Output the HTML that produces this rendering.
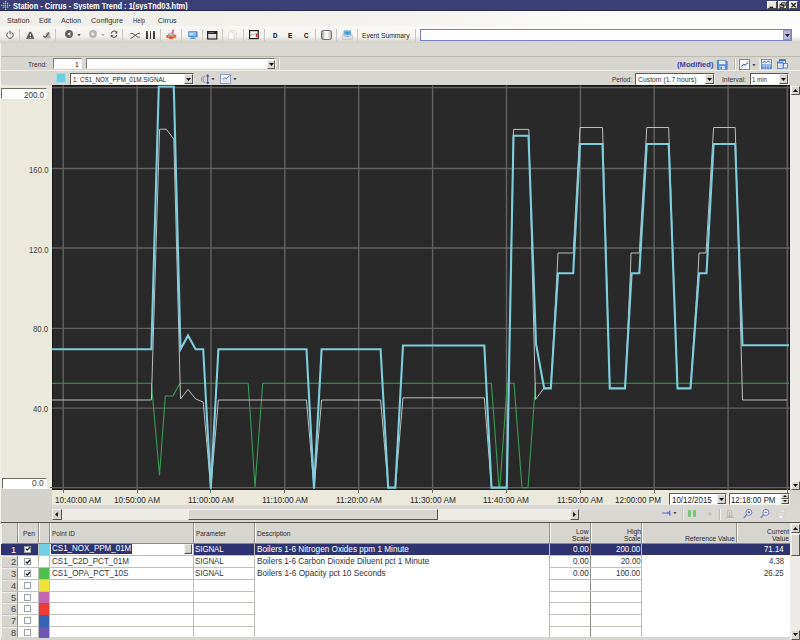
<!DOCTYPE html>
<html lang="en"><head><meta charset="utf-8"><title>Station - Cirrus - System Trend</title>
<style>
html,body{margin:0;padding:0;}
body{width:800px;height:640px;overflow:hidden;position:relative;background:#d6d5d0;font-family:"Liberation Sans", sans-serif;}
.a{position:absolute;}
.t{position:absolute;white-space:pre;transform-origin:0 50%;}
svg{position:absolute;left:0;top:0;overflow:visible;}
</style></head><body>
<div class="a" style="left:0px;top:0px;width:800px;height:10.5px;background:#3c3f76;"></div>
<span class="t" id="t0" style="left:12.8px;top:0.30px;font-size:8.4px;line-height:12.4px;color:#fff;font-weight:bold;transform:scaleX(0.8874);">Station - Cirrus - System Trend : 1(sysTnd03.htm)</span>
<svg width="12" height="11" viewBox="0 0 12 11"><g transform="translate(5.7 5.4) rotate(45)" opacity="0.9"><rect x="-3.38" y="-3.38" width="1.35" height="1.35" fill="#b4e0d6"/><rect x="-3.38" y="-2.03" width="1.35" height="1.35" fill="#2c3a5e"/><rect x="-3.38" y="-0.68" width="1.35" height="1.35" fill="#b4e0d6"/><rect x="-3.38" y="0.68" width="1.35" height="1.35" fill="#2c3a5e"/><rect x="-3.38" y="2.03" width="1.35" height="1.35" fill="#b4e0d6"/><rect x="-2.03" y="-3.38" width="1.35" height="1.35" fill="#2c3a5e"/><rect x="-2.03" y="-2.03" width="1.35" height="1.35" fill="#b4e0d6"/><rect x="-2.03" y="-0.68" width="1.35" height="1.35" fill="#2c3a5e"/><rect x="-2.03" y="0.68" width="1.35" height="1.35" fill="#b4e0d6"/><rect x="-2.03" y="2.03" width="1.35" height="1.35" fill="#2c3a5e"/><rect x="-0.68" y="-3.38" width="1.35" height="1.35" fill="#b4e0d6"/><rect x="-0.68" y="-2.03" width="1.35" height="1.35" fill="#2c3a5e"/><rect x="-0.68" y="-0.68" width="1.35" height="1.35" fill="#d6f2ea"/><rect x="-0.68" y="0.68" width="1.35" height="1.35" fill="#2c3a5e"/><rect x="-0.68" y="2.03" width="1.35" height="1.35" fill="#b4e0d6"/><rect x="0.68" y="-3.38" width="1.35" height="1.35" fill="#2c3a5e"/><rect x="0.68" y="-2.03" width="1.35" height="1.35" fill="#b4e0d6"/><rect x="0.68" y="-0.68" width="1.35" height="1.35" fill="#2c3a5e"/><rect x="0.68" y="0.68" width="1.35" height="1.35" fill="#b4e0d6"/><rect x="0.68" y="2.03" width="1.35" height="1.35" fill="#2c3a5e"/><rect x="2.03" y="-3.38" width="1.35" height="1.35" fill="#b4e0d6"/><rect x="2.03" y="-2.03" width="1.35" height="1.35" fill="#2c3a5e"/><rect x="2.03" y="-0.68" width="1.35" height="1.35" fill="#b4e0d6"/><rect x="2.03" y="0.68" width="1.35" height="1.35" fill="#2c3a5e"/><rect x="2.03" y="2.03" width="1.35" height="1.35" fill="#b4e0d6"/></g></svg>
<div class="a" style="left:0px;top:9.6px;width:800px;height:1px;background:#23265a;"></div>
<div class="a" style="left:767.2px;top:1.2px;width:9.4px;height:8px;background:#e6e4dc;border:1px solid #fbfaf6;box-sizing:border-box;border-right-color:#4a4844;border-bottom-color:#4a4844;"></div>
<svg style="left:767.2px;top:1px" width="10" height="9" viewBox="0 0 10 9"><path d="M2.6 6.3h3.6" stroke="#1a1a1a" stroke-width="1.3"/></svg>
<div class="a" style="left:778px;top:1.2px;width:9px;height:8px;background:#e6e4dc;border:1px solid #fbfaf6;box-sizing:border-box;border-right-color:#4a4844;border-bottom-color:#4a4844;"></div>
<svg style="left:778px;top:1px" width="10" height="9" viewBox="0 0 10 9"><path d="M3.6 1.8h3.6v3h-3.6zM2 3.6h3.6v3h-3.6z" fill="#e6e4dc" stroke="#1a1a1a" stroke-width="0.9"/></svg>
<div class="a" style="left:788.8px;top:1.2px;width:9.2px;height:8px;background:#e6e4dc;border:1px solid #fbfaf6;box-sizing:border-box;border-right-color:#4a4844;border-bottom-color:#4a4844;"></div>
<svg style="left:788.8px;top:1px" width="10" height="9" viewBox="0 0 10 9"><path d="M2.4 2l4.4 4.4M6.8 2l-4.4 4.4" stroke="#1a1a1a" stroke-width="1.2"/></svg>
<div class="a" style="left:0px;top:10.5px;width:800px;height:16px;background:linear-gradient(90deg,#efeee8,#f3f2ee 45%,#fcfcfb 80%);"></div>
<span class="t" id="t1" style="left:6.5px;top:15.20px;font-size:7.6px;line-height:11.6px;color:#333;transform:scaleX(0.9511);">Station</span>
<span class="t" id="t2" style="left:39px;top:15.20px;font-size:7.6px;line-height:11.6px;color:#333;transform:scaleX(0.9165);">Edit</span>
<span class="t" id="t3" style="left:61px;top:15.20px;font-size:7.6px;line-height:11.6px;color:#333;transform:scaleX(0.9474);">Action</span>
<span class="t" id="t4" style="left:91px;top:15.20px;font-size:7.6px;line-height:11.6px;color:#333;transform:scaleX(0.9715);">Configure</span>
<span class="t" id="t5" style="left:132.5px;top:15.20px;font-size:7.6px;line-height:11.6px;color:#333;transform:scaleX(0.7680);">Help</span>
<span class="t" id="t6" style="left:157.5px;top:15.20px;font-size:7.6px;line-height:11.6px;color:#333;transform:scaleX(0.9136);">Cirrus</span>
<div class="a" style="left:0px;top:26px;width:800px;height:17px;background:linear-gradient(90deg,#f3f2ee,#f6f5f2 45%,#fdfdfc 80%);"></div>
<div class="a" style="left:0px;top:26px;width:800px;height:17px;background:linear-gradient(rgba(255,255,255,0.35),rgba(255,255,255,0) 45%,rgba(214,211,202,0) 60%,rgba(205,202,193,0.9));"></div>
<div class="a" style="left:18.7px;top:29px;width:1.1px;height:12px;background:#c9c7c0;"></div>
<div class="a" style="left:55.2px;top:29px;width:1.1px;height:12px;background:#c9c7c0;"></div>
<div class="a" style="left:122.2px;top:29px;width:1.1px;height:12px;background:#c9c7c0;"></div>
<div class="a" style="left:159.7px;top:29px;width:1.1px;height:12px;background:#c9c7c0;"></div>
<div class="a" style="left:180.7px;top:29px;width:1.1px;height:12px;background:#c9c7c0;"></div>
<div class="a" style="left:202.2px;top:29px;width:1.1px;height:12px;background:#c9c7c0;"></div>
<div class="a" style="left:222.2px;top:29px;width:1.1px;height:12px;background:#c9c7c0;"></div>
<div class="a" style="left:242.7px;top:29px;width:1.1px;height:12px;background:#c9c7c0;"></div>
<div class="a" style="left:263.7px;top:29px;width:1.1px;height:12px;background:#c9c7c0;"></div>
<div class="a" style="left:315.2px;top:29px;width:1.1px;height:12px;background:#c9c7c0;"></div>
<div class="a" style="left:335.7px;top:29px;width:1.1px;height:12px;background:#c9c7c0;"></div>
<div class="a" style="left:356.7px;top:29px;width:1.1px;height:12px;background:#c9c7c0;"></div>
<div class="a" style="left:414.7px;top:29px;width:1.1px;height:12px;background:#c9c7c0;"></div>
<span class="t" id="t7" style="left:362.3px;top:30.20px;font-size:7.6px;line-height:11.6px;color:#222;transform:scaleX(0.8828);">Event Summary</span>
<div class="a" style="left:420px;top:28.8px;width:372.3px;height:12px;background:#fff;border:1px solid #7484b8;box-sizing:border-box;"></div>
<div class="a" style="left:783.2px;top:29.8px;width:8.2px;height:10px;background:#b7b8da;border:1px solid #9496c6;box-sizing:border-box;"></div>
<svg style="left:785px;top:33.8px" width="5" height="4"><path d="M0 0h5L2.5 3z" fill="#222"/></svg>
<div class="a" style="left:0px;top:43px;width:800px;height:12.7px;background:#d9d8d3;"></div>
<div class="a" style="left:0px;top:55.7px;width:800px;height:1px;background:#bcb9b0;"></div>
<div class="a" style="left:0px;top:56.7px;width:800px;height:14px;background:#d7d6d1;"></div>
<span class="t" id="t8" style="left:28.2px;top:59.10px;font-size:7.8px;line-height:11.8px;color:#333;transform:scaleX(0.8539);">Trend:</span>
<div class="a" style="left:52.5px;top:58.2px;width:29.8px;height:11.2px;background:#fff;border:1px solid #f4f2ec;box-sizing:border-box;border-top-color:#807e78;border-left-color:#807e78;"></div>
<span class="t" id="t9" style="left:75.3px;top:59.10px;font-size:7.8px;line-height:11.8px;color:#222;transform:scaleX(0.8748);">1</span>
<div class="a" style="left:85.6px;top:58.2px;width:190.6px;height:11.2px;background:#fff;border:1px solid #f4f2ec;box-sizing:border-box;border-top-color:#807e78;border-left-color:#807e78;"></div>
<div class="a" style="left:267px;top:59.5px;width:8px;height:9px;background:#d7d6d1;border:1px solid #f2f0ea;box-sizing:border-box;border-right-color:#66645e;border-bottom-color:#66645e;"></div>
<svg style="left:268.5px;top:62.5px" width="5" height="4"><path d="M0 0h5L2.5 3z" fill="#111"/></svg>
<div class="a" style="left:0px;top:70.4px;width:800px;height:1.1px;background:#efede7;"></div>
<div class="a" style="left:278px;top:58px;width:1px;height:12px;background:#bdbab1;"></div>
<div class="a" style="left:279px;top:58px;width:1px;height:12px;background:#f4f2ec;"></div>
<span class="t" id="t10" style="left:676.5px;top:59.20px;font-size:7.6px;line-height:11.6px;color:#3b40a5;font-weight:bold;transform:scaleX(1.0060);">(Modified)</span>
<div class="a" style="left:0px;top:71.5px;width:800px;height:14.5px;background:#d7d6d1;"></div>
<div class="a" style="left:56px;top:73.4px;width:10.4px;height:9.8px;background:#6fcfe0;border:1px solid #9adfe9;box-sizing:border-box;"></div>
<div class="a" style="left:70px;top:73px;width:124px;height:12px;background:#fff;border:1px solid #f1efe9;box-sizing:border-box;border-top-color:#5e5c57;border-left-color:#5e5c57;"></div>
<span class="t" id="t11" style="left:73px;top:74.10px;font-size:7.8px;line-height:11.8px;color:#222;transform:scaleX(0.7977);">1: CS1_NOX_PPM_01M.SIGNAL</span>
<div class="a" style="left:184px;top:74px;width:9px;height:10px;background:#d7d6d1;border:1px solid #f2f0ea;box-sizing:border-box;border-right-color:#55534e;border-bottom-color:#55534e;"></div>
<svg style="left:186px;top:77.5px" width="5" height="4"><path d="M0 0h5L2.5 3z" fill="#111"/></svg>
<span class="t" id="t12" style="left:612px;top:74.20px;font-size:7.6px;line-height:11.6px;color:#333;transform:scaleX(0.8312);">Period:</span>
<div class="a" style="left:635px;top:73px;width:80px;height:12px;background:#fff;border:1px solid #f1efe9;box-sizing:border-box;border-top-color:#5e5c57;border-left-color:#5e5c57;"></div>
<span class="t" id="t13" style="left:638px;top:74.20px;font-size:7.6px;line-height:11.6px;color:#333;transform:scaleX(0.9000);">Custom (1.7 hours)</span>
<div class="a" style="left:704.5px;top:74px;width:9.5px;height:10px;background:#d7d6d1;border:1px solid #f2f0ea;box-sizing:border-box;border-right-color:#55534e;border-bottom-color:#55534e;"></div>
<svg style="left:707px;top:77.5px" width="5" height="4"><path d="M0 0h5L2.5 3z" fill="#111"/></svg>
<span class="t" id="t14" style="left:722px;top:74.20px;font-size:7.6px;line-height:11.6px;color:#333;transform:scaleX(0.8884);">Interval:</span>
<div class="a" style="left:749.5px;top:73px;width:39px;height:12px;background:#fff;border:1px solid #f1efe9;box-sizing:border-box;border-top-color:#5e5c57;border-left-color:#5e5c57;"></div>
<span class="t" id="t15" style="left:751.5px;top:74.20px;font-size:7.6px;line-height:11.6px;color:#333;transform:scaleX(0.8074);">1 min</span>
<div class="a" style="left:779px;top:74px;width:9px;height:10px;background:#d7d6d1;border:1px solid #f2f0ea;box-sizing:border-box;border-right-color:#55534e;border-bottom-color:#55534e;"></div>
<svg style="left:781px;top:77.5px" width="5" height="4"><path d="M0 0h5L2.5 3z" fill="#111"/></svg>
<div class="a" style="left:0px;top:84.8px;width:52.3px;height:404px;background:#ebe9dc;"></div>
<div class="a" style="left:1.2px;top:88.4px;width:45.5px;height:10.6px;background:#fff;border:1px solid #fff;box-sizing:border-box;border-top-color:#6e6c66;border-left-color:#6e6c66;"></div>
<span class="t" id="t16" style="left:23.7px;top:89.90px;font-size:8.2px;line-height:12.2px;color:#333;transform:scaleX(0.9805);">200.0</span>
<span class="t" id="t17" style="left:28.9px;top:164.90px;font-size:8.2px;line-height:12.2px;color:#444;transform:scaleX(0.9512);">160.0</span>
<span class="t" id="t18" style="left:28.9px;top:244.90px;font-size:8.2px;line-height:12.2px;color:#444;transform:scaleX(0.9512);">120.0</span>
<span class="t" id="t19" style="left:33.2px;top:323.90px;font-size:8.2px;line-height:12.2px;color:#444;transform:scaleX(0.9537);">80.0</span>
<span class="t" id="t20" style="left:33.2px;top:403.90px;font-size:8.2px;line-height:12.2px;color:#444;transform:scaleX(0.9537);">40.0</span>
<div class="a" style="left:1.5px;top:477.7px;width:45px;height:11px;background:#fff;border:1px solid #fff;box-sizing:border-box;border-top-color:#6e6c66;border-left-color:#6e6c66;"></div>
<span class="t" id="t21" style="left:32.2px;top:477.90px;font-size:8.2px;line-height:12.2px;color:#444;transform:scaleX(1.0272);">0.0</span>
<div class="a" style="left:52.1px;top:85.4px;width:737.6999999999999px;height:404.70000000000005px;background:#292929;border:1.5px solid #161616;box-sizing:border-box;"></div>
<svg width="800" height="640" viewBox="0 0 800 640"><defs><clipPath id="cc"><rect x="52.1" y="85.4" width="737.6999999999999" height="404.70000000000005"/></clipPath></defs><g stroke="#626262" stroke-width="1.4" fill="none"><path d="M63.2 85.4V490.1"/><path d="M137.1 85.4V490.1"/><path d="M211.0 85.4V490.1"/><path d="M284.8 85.4V490.1"/><path d="M358.7 85.4V490.1"/><path d="M432.6 85.4V490.1"/><path d="M506.5 85.4V490.1"/><path d="M580.4 85.4V490.1"/><path d="M654.2 85.4V490.1"/><path d="M728.1 85.4V490.1"/><path d="M52.1 87.6H789.8"/><path d="M52.1 168.5H789.8"/><path d="M52.1 248H789.8"/><path d="M52.1 328.4H789.8"/><path d="M52.1 408.1H789.8"/><path d="M52.1 487.6H789.8"/><path d="M787.3 85.4V490.1"/></g><g clip-path="url(#cc)" fill="none" stroke-linejoin="miter"><polyline points="52,383.2 151.4,383.2 159.5,475.4 165.3,396 172.9,396 180,383.2 248.2,383.2 255,487 262.7,383.2 491.4,383.2 499,487.6 499.8,487.6 507.3,383.2 514,383.2 522,487.6 528,487.6 535.5,383.2 789,383.2" stroke="#3d9a55" stroke-width="1.1"/><polyline points="52,400 151.4,400 159.6,129.2 166.3,129.2 173.8,139 180.5,399 188,389.4 195.6,399 203.2,402 210.8,488.5 218.4,400 306.5,400 314,488.5 321.6,400 380.6,400 388.2,487.6 395.3,487.6 403,397.8 484.3,397.8 491.5,487.6 506.8,487.6 513.5,129.4 528.8,129.4 535.5,399.5 544.2,387.8 550.8,388.4 557,273.3 558,253 573.2,253 580,127.5 602.5,127.5 603,144 609.8,388.4 625,388.4 630.4,273.3 631,253 639.3,253 646.8,127.5 668.7,127.5 669.2,144 677.5,388.4 690.5,388.4 698,273.3 699,253 706,253 713.6,127.5 735.2,127.5 735.7,144 742.5,400 787,400" stroke="#cfcfcf" stroke-width="0.9"/><polyline points="52,349.3 151.4,349.3 158.8,86.4 173.8,86.4 180.5,349.3 188,335.5 195.6,349.3 203.2,349.3 210.8,488.5 218.4,349.3 306.5,349.3 314,488.5 321.6,349.3 380.6,349.3 388.2,487.6 395.3,487.6 403,345.5 484.3,345.5 491.5,487.6 506.8,487.6 513.5,135.8 528.5,135.8 536,344 544.2,388.4 550.8,388.4 558,273.3 573.2,273.3 580,144 602.5,144 609.8,388.4 625,388.4 631.6,273.3 639.3,273.3 646.8,144 668.7,144 677.5,388.4 690.5,388.4 699,273.3 706.5,273.3 713.6,144 735.2,144 742.5,345.3 789,345.3" stroke="#80cddc" stroke-width="2.1"/></g></svg>
<div class="a" style="left:790px;top:86px;width:10px;height:404px;background:#ecebe7;"></div>
<div class="a" style="left:790.5px;top:86px;width:9.5px;height:9px;background:#d7d6d1;border:1px solid #f2f0ea;box-sizing:border-box;border-right-color:#55534e;border-bottom-color:#55534e;"></div>
<svg style="left:793px;top:89px" width="5" height="4"><path d="M0 3h5L2.5 0z" fill="#111"/></svg>
<div class="a" style="left:790.5px;top:481px;width:9.5px;height:9px;background:#d7d6d1;border:1px solid #f2f0ea;box-sizing:border-box;border-right-color:#55534e;border-bottom-color:#55534e;"></div>
<svg style="left:793px;top:484px" width="5" height="4"><path d="M0 0h5L2.5 3z" fill="#111"/></svg>
<div class="a" style="left:0px;top:488.8px;width:52px;height:33px;background:#d3d2cd;"></div>
<div class="a" style="left:52px;top:490.1px;width:738px;height:14.9px;background:#ebe9dc;"></div>
<div class="a" style="left:790px;top:490.1px;width:10px;height:14.9px;background:#d7d6d1;"></div>
<div class="a" style="left:50px;top:487.1px;width:2.2px;height:1px;background:#555;"></div>
<div class="a" style="left:62.7px;top:490px;width:1px;height:3.3px;background:#6a6a68;"></div>
<span class="t" id="t22" style="left:55.2px;top:494.30px;font-size:8.4px;line-height:12.4px;color:#262626;transform:scaleX(0.9781);">10:40:00 AM</span>
<div class="a" style="left:136.57999999999998px;top:490px;width:1px;height:3.3px;background:#6a6a68;"></div>
<span class="t" id="t23" style="left:114.07999999999998px;top:494.30px;font-size:8.4px;line-height:12.4px;color:#262626;transform:scaleX(0.9781);">10:50:00 AM</span>
<div class="a" style="left:210.45999999999998px;top:490px;width:1px;height:3.3px;background:#6a6a68;"></div>
<span class="t" id="t24" style="left:187.95999999999998px;top:494.30px;font-size:8.4px;line-height:12.4px;color:#262626;transform:scaleX(0.9912);">11:00:00 AM</span>
<div class="a" style="left:284.34px;top:490px;width:1px;height:3.3px;background:#6a6a68;"></div>
<span class="t" id="t25" style="left:261.84px;top:494.30px;font-size:8.4px;line-height:12.4px;color:#262626;transform:scaleX(0.9912);">11:10:00 AM</span>
<div class="a" style="left:358.21999999999997px;top:490px;width:1px;height:3.3px;background:#6a6a68;"></div>
<span class="t" id="t26" style="left:335.71999999999997px;top:494.30px;font-size:8.4px;line-height:12.4px;color:#262626;transform:scaleX(0.9912);">11:20:00 AM</span>
<div class="a" style="left:432.09999999999997px;top:490px;width:1px;height:3.3px;background:#6a6a68;"></div>
<span class="t" id="t27" style="left:409.59999999999997px;top:494.30px;font-size:8.4px;line-height:12.4px;color:#262626;transform:scaleX(0.9912);">11:30:00 AM</span>
<div class="a" style="left:505.97999999999996px;top:490px;width:1px;height:3.3px;background:#6a6a68;"></div>
<span class="t" id="t28" style="left:483.47999999999996px;top:494.30px;font-size:8.4px;line-height:12.4px;color:#262626;transform:scaleX(0.9912);">11:40:00 AM</span>
<div class="a" style="left:579.86px;top:490px;width:1px;height:3.3px;background:#6a6a68;"></div>
<span class="t" id="t29" style="left:557.36px;top:494.30px;font-size:8.4px;line-height:12.4px;color:#262626;transform:scaleX(0.9912);">11:50:00 AM</span>
<div class="a" style="left:653.74px;top:490px;width:1px;height:3.3px;background:#6a6a68;"></div>
<span class="t" id="t30" style="left:614.5px;top:494.30px;font-size:8.4px;line-height:12.4px;color:#262626;transform:scaleX(0.9684);">12:00:00 PM</span>
<div class="a" style="left:786.8px;top:490px;width:1px;height:3px;background:#6a6a68;"></div>
<div class="a" style="left:669.3px;top:492.8px;width:57.6px;height:12px;background:#fff;border:1px solid #f1efe9;box-sizing:border-box;border-top-color:#5e5c57;border-left-color:#5e5c57;"></div>
<span class="t" id="t31" style="left:671.8px;top:494.00px;font-size:9px;line-height:13px;color:#222;transform:scaleX(0.8835);">10/12/2015</span>
<div class="a" style="left:717px;top:493.8px;width:9px;height:10px;background:#d7d6d1;border:1px solid #f2f0ea;box-sizing:border-box;border-right-color:#55534e;border-bottom-color:#55534e;"></div>
<svg style="left:719px;top:497.5px" width="5" height="4"><path d="M0 0h5L2.5 3z" fill="#111"/></svg>
<div class="a" style="left:729px;top:492.8px;width:61px;height:12px;background:#fff;border:1px solid #f1efe9;box-sizing:border-box;border-top-color:#5e5c57;border-left-color:#5e5c57;"></div>
<span class="t" id="t32" style="left:731.2px;top:494.00px;font-size:9px;line-height:13px;color:#222;transform:scaleX(0.8698);">12:18:00 PM</span>
<div class="a" style="left:780.5px;top:493.8px;width:8.5px;height:5px;background:#d7d6d1;border:1px solid #f2f0ea;box-sizing:border-box;border-right-color:#55534e;border-bottom-color:#55534e;"></div>
<div class="a" style="left:780.5px;top:498.8px;width:8.5px;height:5px;background:#d7d6d1;border:1px solid #f2f0ea;box-sizing:border-box;border-right-color:#55534e;border-bottom-color:#55534e;"></div>
<svg style="left:782.8px;top:495.3px" width="4" height="7"><path d="M0 2h4L2 0zM0 5h4L2 7z" fill="#111"/></svg>
<div class="a" style="left:52px;top:505px;width:748px;height:17px;background:#d9d8d4;"></div>
<div class="a" style="left:52px;top:509px;width:527px;height:10.5px;background:#ecebe7;"></div>
<div class="a" style="left:52px;top:509px;width:9.5px;height:10.5px;background:#d7d6d1;border:1px solid #f2f0ea;box-sizing:border-box;border-right-color:#55534e;border-bottom-color:#55534e;"></div>
<svg style="left:55px;top:511.5px" width="4" height="5"><path d="M3 0v5L0 2.5z" fill="#111"/></svg>
<div class="a" style="left:569.5px;top:509px;width:9.5px;height:10.5px;background:#d7d6d1;border:1px solid #f2f0ea;box-sizing:border-box;border-right-color:#55534e;border-bottom-color:#55534e;"></div>
<svg style="left:573px;top:511.5px" width="4" height="5"><path d="M0 0v5L3 2.5z" fill="#111"/></svg>
<div class="a" style="left:187.5px;top:509px;width:250.5px;height:10.5px;background:#d7d6d1;border:1px solid #f2f0ea;box-sizing:border-box;border-right-color:#55534e;border-bottom-color:#55534e;"></div>
<div class="a" style="left:0px;top:521.5px;width:800px;height:1.5px;background:#55534e;"></div>
<div class="a" style="left:0px;top:523px;width:790px;height:21px;background:#d6d5d0;"></div>
<div class="a" style="left:0px;top:544px;width:790px;height:96px;background:#fff;"></div>
<div class="a" style="left:0px;top:544.2px;width:790px;height:10.6px;background:#2f3470;"></div>
<div class="a" style="left:0px;top:544px;width:17.5px;height:96px;background:#d6d5d0;"></div>
<div class="a" style="left:17.0px;top:523px;width:1px;height:21px;background:#96948c;"></div>
<div class="a" style="left:18.0px;top:523px;width:1px;height:21px;background:#f6f5f1;"></div>
<div class="a" style="left:17.0px;top:544px;width:1px;height:93px;background:#8f8e89;"></div>
<div class="a" style="left:37.7px;top:523px;width:1px;height:21px;background:#96948c;"></div>
<div class="a" style="left:38.7px;top:523px;width:1px;height:21px;background:#f6f5f1;"></div>
<div class="a" style="left:37.7px;top:544px;width:1px;height:93px;background:#bdbcb7;"></div>
<div class="a" style="left:49.3px;top:523px;width:1px;height:21px;background:#96948c;"></div>
<div class="a" style="left:50.3px;top:523px;width:1px;height:21px;background:#f6f5f1;"></div>
<div class="a" style="left:49.3px;top:544px;width:1px;height:93px;background:#bdbcb7;"></div>
<div class="a" style="left:192.5px;top:523px;width:1px;height:21px;background:#96948c;"></div>
<div class="a" style="left:193.5px;top:523px;width:1px;height:21px;background:#f6f5f1;"></div>
<div class="a" style="left:192.5px;top:544px;width:1px;height:93px;background:#bdbcb7;"></div>
<div class="a" style="left:254.0px;top:523px;width:1px;height:21px;background:#96948c;"></div>
<div class="a" style="left:255.0px;top:523px;width:1px;height:21px;background:#f6f5f1;"></div>
<div class="a" style="left:254.0px;top:544px;width:1px;height:93px;background:#bdbcb7;"></div>
<div class="a" style="left:549.3px;top:523px;width:1px;height:21px;background:#96948c;"></div>
<div class="a" style="left:550.3px;top:523px;width:1px;height:21px;background:#f6f5f1;"></div>
<div class="a" style="left:549.3px;top:544px;width:1px;height:93px;background:#bdbcb7;"></div>
<div class="a" style="left:590.0px;top:523px;width:1px;height:21px;background:#96948c;"></div>
<div class="a" style="left:591.0px;top:523px;width:1px;height:21px;background:#f6f5f1;"></div>
<div class="a" style="left:590.0px;top:544px;width:1px;height:93px;background:#8f8e89;"></div>
<div class="a" style="left:641.2px;top:523px;width:1px;height:21px;background:#96948c;"></div>
<div class="a" style="left:642.2px;top:523px;width:1px;height:21px;background:#f6f5f1;"></div>
<div class="a" style="left:641.2px;top:544px;width:1px;height:93px;background:#bdbcb7;"></div>
<div class="a" style="left:736.1px;top:523px;width:1px;height:21px;background:#96948c;"></div>
<div class="a" style="left:737.1px;top:523px;width:1px;height:21px;background:#f6f5f1;"></div>
<div class="a" style="left:0px;top:555.0500000000001px;width:254.5px;height:1px;background:#c2c1bc;"></div>
<div class="a" style="left:549.5px;top:555.0500000000001px;width:92px;height:1px;background:#c2c1bc;"></div>
<div class="a" style="left:0px;top:566.9000000000001px;width:254.5px;height:1px;background:#c2c1bc;"></div>
<div class="a" style="left:549.5px;top:566.9000000000001px;width:92px;height:1px;background:#c2c1bc;"></div>
<div class="a" style="left:0px;top:578.75px;width:254.5px;height:1px;background:#c2c1bc;"></div>
<div class="a" style="left:549.5px;top:578.75px;width:92px;height:1px;background:#c2c1bc;"></div>
<div class="a" style="left:0px;top:590.6px;width:254.5px;height:1px;background:#c2c1bc;"></div>
<div class="a" style="left:549.5px;top:590.6px;width:92px;height:1px;background:#c2c1bc;"></div>
<div class="a" style="left:0px;top:602.45px;width:254.5px;height:1px;background:#c2c1bc;"></div>
<div class="a" style="left:549.5px;top:602.45px;width:92px;height:1px;background:#c2c1bc;"></div>
<div class="a" style="left:0px;top:614.3000000000001px;width:254.5px;height:1px;background:#c2c1bc;"></div>
<div class="a" style="left:549.5px;top:614.3000000000001px;width:92px;height:1px;background:#c2c1bc;"></div>
<div class="a" style="left:0px;top:626.1500000000001px;width:254.5px;height:1px;background:#c2c1bc;"></div>
<div class="a" style="left:549.5px;top:626.1500000000001px;width:92px;height:1px;background:#c2c1bc;"></div>
<div class="a" style="left:0px;top:543.3px;width:790px;height:1px;background:#8a8880;"></div>
<div class="a" style="left:0px;top:544.2px;width:17px;height:1px;background:#efede8;"></div>
<div class="a" style="left:0px;top:556.0500000000001px;width:17px;height:1px;background:#efede8;"></div>
<div class="a" style="left:0px;top:567.9000000000001px;width:17px;height:1px;background:#efede8;"></div>
<div class="a" style="left:0px;top:579.75px;width:17px;height:1px;background:#efede8;"></div>
<div class="a" style="left:0px;top:591.6px;width:17px;height:1px;background:#efede8;"></div>
<div class="a" style="left:0px;top:603.45px;width:17px;height:1px;background:#efede8;"></div>
<div class="a" style="left:0px;top:615.3000000000001px;width:17px;height:1px;background:#efede8;"></div>
<div class="a" style="left:0px;top:627.1500000000001px;width:17px;height:1px;background:#efede8;"></div>
<div class="a" style="left:0px;top:523px;width:1.5px;height:114px;background:#f2f1ec;"></div>
<div class="a" style="left:0px;top:637px;width:790px;height:3px;background:#d6d5d0;"></div>
<span class="t" id="t33" style="left:23px;top:528.20px;font-size:7.6px;line-height:11.6px;color:#2a2a2a;transform:scaleX(0.8879);">Pen</span>
<span class="t" id="t34" style="left:52px;top:528.20px;font-size:7.6px;line-height:11.6px;color:#2a2a2a;transform:scaleX(0.8514);">Point ID</span>
<span class="t" id="t35" style="left:195.5px;top:528.20px;font-size:7.6px;line-height:11.6px;color:#2a2a2a;transform:scaleX(0.8462);">Parameter</span>
<span class="t" id="t36" style="left:257px;top:528.20px;font-size:7.6px;line-height:11.6px;color:#2a2a2a;transform:scaleX(0.8819);">Description</span>
<span class="t" id="t37" style="left:576px;top:526.20px;font-size:7.6px;line-height:11.6px;color:#2a2a2a;transform:scaleX(0.9112);">Low</span>
<span class="t" id="t38" style="left:571.8px;top:533.20px;font-size:7.6px;line-height:11.6px;color:#2a2a2a;transform:scaleX(0.8895);">Scale</span>
<span class="t" id="t39" style="left:626.5px;top:526.20px;font-size:7.6px;line-height:11.6px;color:#2a2a2a;transform:scaleX(0.8960);">High</span>
<span class="t" id="t40" style="left:623.8px;top:533.20px;font-size:7.6px;line-height:11.6px;color:#2a2a2a;transform:scaleX(0.8789);">Scale</span>
<span class="t" id="t41" style="left:685.3px;top:533.20px;font-size:7.6px;line-height:11.6px;color:#2a2a2a;transform:scaleX(0.8873);">Reference Value</span>
<span class="t" id="t42" style="left:766.5px;top:526.20px;font-size:7.6px;line-height:11.6px;color:#2a2a2a;transform:scaleX(0.8725);">Current</span>
<span class="t" id="t43" style="left:771.5px;top:533.20px;font-size:7.6px;line-height:11.6px;color:#2a2a2a;transform:scaleX(0.9067);">Value</span>
<div class="a" style="left:0px;top:544.2px;width:17.5px;height:10.6px;background:#2f3470;"></div>
<span class="t" id="t44" style="left:11px;top:543.10px;font-size:9.8px;line-height:13.8px;color:#fff;transform:scaleX(0.9536);">1</span>
<div class="a" style="left:24.4px;top:545.7px;width:7px;height:7px;background:#fff;border:1px solid #9ca1aa;box-sizing:border-box;"></div>
<svg style="left:25.4px;top:546.4px" width="6" height="6"><path d="M0.8 2.6L2.3 4.2L5 1" fill="none" stroke="#111" stroke-width="1.2"/></svg>
<div class="a" style="left:38.7px;top:544.2px;width:10.6px;height:11.3px;background:#70cfe0;"></div>
<div class="a" style="left:50px;top:543.5px;width:142.5px;height:11.3px;background:#fff;"></div>
<div class="a" style="left:51px;top:543.6px;width:80.8px;height:10px;background:#2f3470;"></div>
<div class="a" style="left:183.5px;top:544.0px;width:8.5px;height:10.4px;background:#d7d6d1;border:1px solid #f2f0ea;box-sizing:border-box;border-right-color:#55534e;border-bottom-color:#55534e;"></div>
<span class="t" id="t45" style="left:185.5px;top:545.50px;font-size:6px;line-height:10px;color:#333;transform:scaleX(0.8972);">...</span>
<span class="t" id="t46" style="left:52px;top:542.25px;font-size:8.5px;line-height:12.5px;color:#fff;transform:scaleX(0.9430);">CS1_NOX_PPM_01M</span>
<span class="t" id="t47" style="left:195.3px;top:543.25px;font-size:8.5px;line-height:12.5px;color:#fff;transform:scaleX(0.9202);">SIGNAL</span>
<span class="t" id="t48" style="left:257.3px;top:543.25px;font-size:8.5px;line-height:12.5px;color:#fff;transform:scaleX(0.9620);">Boilers 1-6 Nitrogen Oxides ppm 1 Minute</span>
<span class="t" id="t49" style="left:572.8px;top:543.25px;font-size:8.5px;line-height:12.5px;color:#fff;transform:scaleX(0.9609);">0.00</span>
<span class="t" id="t50" style="left:616.4px;top:543.25px;font-size:8.5px;line-height:12.5px;color:#fff;transform:scaleX(0.9308);">200.00</span>
<span class="t" id="t51" style="left:764.1999999999999px;top:543.25px;font-size:8.5px;line-height:12.5px;color:#fff;transform:scaleX(0.9210);">71.14</span>
<span class="t" id="t52" style="left:11px;top:555.10px;font-size:9.8px;line-height:13.8px;color:#444;transform:scaleX(0.9536);">2</span>
<div class="a" style="left:24.4px;top:557.95px;width:7px;height:7px;background:#fff;border:1px solid #9ca1aa;box-sizing:border-box;"></div>
<svg style="left:25.4px;top:558.7px" width="6" height="6"><path d="M0.8 2.6L2.3 4.2L5 1" fill="none" stroke="#111" stroke-width="1.2"/></svg>
<div class="a" style="left:38.7px;top:556.0500000000001px;width:10.6px;height:11.3px;background:#ffffff;"></div>
<span class="t" id="t53" style="left:52px;top:555.25px;font-size:8.5px;line-height:12.5px;color:#333;transform:scaleX(0.9475);">CS1_C2D_PCT_01M</span>
<span class="t" id="t54" style="left:195.3px;top:555.25px;font-size:8.5px;line-height:12.5px;color:#333;transform:scaleX(0.9202);">SIGNAL</span>
<span class="t" id="t55" style="left:257.3px;top:555.25px;font-size:8.5px;line-height:12.5px;color:#333;transform:scaleX(0.9617);">Boilers 1-6 Carbon Dioxide Diluent pct 1 Minute</span>
<span class="t" id="t56" style="left:572.8px;top:555.25px;font-size:8.5px;line-height:12.5px;color:#333;transform:scaleX(0.9609);">0.00</span>
<span class="t" id="t57" style="left:621.0px;top:555.25px;font-size:8.5px;line-height:12.5px;color:#333;transform:scaleX(0.9210);">20.00</span>
<span class="t" id="t58" style="left:768.8px;top:555.25px;font-size:8.5px;line-height:12.5px;color:#333;transform:scaleX(0.9065);">4.38</span>
<span class="t" id="t59" style="left:11px;top:567.10px;font-size:9.8px;line-height:13.8px;color:#444;transform:scaleX(0.9536);">3</span>
<div class="a" style="left:24.4px;top:569.8000000000001px;width:7px;height:7px;background:#fff;border:1px solid #9ca1aa;box-sizing:border-box;"></div>
<svg style="left:25.4px;top:570.5px" width="6" height="6"><path d="M0.8 2.6L2.3 4.2L5 1" fill="none" stroke="#111" stroke-width="1.2"/></svg>
<div class="a" style="left:38.7px;top:567.9000000000001px;width:10.6px;height:11.3px;background:#4fbf52;"></div>
<span class="t" id="t60" style="left:52px;top:567.25px;font-size:8.5px;line-height:12.5px;color:#333;transform:scaleX(0.9542);">CS1_OPA_PCT_10S</span>
<span class="t" id="t61" style="left:195.3px;top:567.25px;font-size:8.5px;line-height:12.5px;color:#333;transform:scaleX(0.9202);">SIGNAL</span>
<span class="t" id="t62" style="left:257.3px;top:567.25px;font-size:8.5px;line-height:12.5px;color:#333;transform:scaleX(0.9694);">Boilers 1-6 Opacity pct 10 Seconds</span>
<span class="t" id="t63" style="left:572.8px;top:567.25px;font-size:8.5px;line-height:12.5px;color:#333;transform:scaleX(0.9609);">0.00</span>
<span class="t" id="t64" style="left:616.4px;top:567.25px;font-size:8.5px;line-height:12.5px;color:#333;transform:scaleX(0.9308);">100.00</span>
<span class="t" id="t65" style="left:764.1999999999999px;top:567.25px;font-size:8.5px;line-height:12.5px;color:#333;transform:scaleX(0.9210);">26.25</span>
<span class="t" id="t66" style="left:11px;top:579.10px;font-size:9.8px;line-height:13.8px;color:#444;transform:scaleX(0.9536);">4</span>
<div class="a" style="left:24.4px;top:581.65px;width:7px;height:7px;background:#fff;border:1px solid #9ca1aa;box-sizing:border-box;"></div>
<div class="a" style="left:38.7px;top:579.75px;width:10.6px;height:11.3px;background:#f2e33a;"></div>
<span class="t" id="t67" style="left:11px;top:591.10px;font-size:9.8px;line-height:13.8px;color:#444;transform:scaleX(0.9536);">5</span>
<div class="a" style="left:24.4px;top:593.5px;width:7px;height:7px;background:#fff;border:1px solid #9ca1aa;box-sizing:border-box;"></div>
<div class="a" style="left:38.7px;top:591.6px;width:10.6px;height:11.3px;background:#c565b3;"></div>
<span class="t" id="t68" style="left:11px;top:602.10px;font-size:9.8px;line-height:13.8px;color:#444;transform:scaleX(0.9536);">6</span>
<div class="a" style="left:24.4px;top:605.35px;width:7px;height:7px;background:#fff;border:1px solid #9ca1aa;box-sizing:border-box;"></div>
<div class="a" style="left:38.7px;top:603.45px;width:10.6px;height:11.3px;background:#ef3b35;"></div>
<span class="t" id="t69" style="left:11px;top:614.10px;font-size:9.8px;line-height:13.8px;color:#444;transform:scaleX(0.9536);">7</span>
<div class="a" style="left:24.4px;top:617.2px;width:7px;height:7px;background:#fff;border:1px solid #9ca1aa;box-sizing:border-box;"></div>
<div class="a" style="left:38.7px;top:615.3000000000001px;width:10.6px;height:11.3px;background:#3563b4;"></div>
<span class="t" id="t70" style="left:11px;top:626.10px;font-size:9.8px;line-height:13.8px;color:#444;transform:scaleX(0.9536);">8</span>
<div class="a" style="left:24.4px;top:629.0500000000001px;width:7px;height:7px;background:#fff;border:1px solid #9ca1aa;box-sizing:border-box;"></div>
<div class="a" style="left:38.7px;top:627.1500000000001px;width:10.6px;height:11.3px;background:#6d55b2;"></div>
<div class="a" style="left:790px;top:523px;width:10px;height:117px;background:#ecebe7;"></div>
<div class="a" style="left:790.5px;top:523.5px;width:9.5px;height:9.5px;background:#d7d6d1;border:1px solid #f2f0ea;box-sizing:border-box;border-right-color:#55534e;border-bottom-color:#55534e;"></div>
<svg style="left:793px;top:526.5px" width="5" height="4"><path d="M0 3h5L2.5 0z" fill="#111"/></svg>
<div class="a" style="left:790.5px;top:630px;width:9.5px;height:9.5px;background:#d7d6d1;border:1px solid #f2f0ea;box-sizing:border-box;border-right-color:#55534e;border-bottom-color:#55534e;"></div>
<svg style="left:793px;top:633px" width="5" height="4"><path d="M0 0h5L2.5 3z" fill="#111"/></svg>
<div class="a" style="left:790.5px;top:533.5px;width:9.5px;height:22px;background:#d7d6d1;border:1px solid #f2f0ea;box-sizing:border-box;border-right-color:#55534e;border-bottom-color:#55534e;"></div>
<div class="a" style="left:0px;top:43px;width:1.1px;height:597px;background:#f1f0eb;"></div>
<svg style="left:5.6px;top:30.4px" width="8" height="8.6" viewBox="0 0 8 8.6"><path d="M2.4 2.3A3.2 3.2 0 1 0 5.6 2.3" fill="none" stroke="#4e4e4e" stroke-width="1"/><path d="M4 0.7V4.1" stroke="#4e4e4e" stroke-width="1"/></svg>
<svg style="left:25.8px;top:30.6px" width="8.6" height="9.4" viewBox="0 0 8.6 9.4"><ellipse cx="4.3" cy="8.3" rx="4" ry="0.9" fill="#dcdad4"/><path d="M4.3 0.9C5 0.9 5.3 1.6 5.6 2.2L8.1 7.6H0.5L3 2.2C3.3 1.6 3.6 0.9 4.3 0.9z" fill="#4a4a4a" stroke="#4a4a4a" stroke-width="0.5" stroke-linejoin="round"/><path d="M4.3 2.8V5.2" stroke="#fff" stroke-width="1.1"/><circle cx="4.3" cy="6.4" r="0.55" fill="#fff"/><path d="M1.2 6.6H3M5.6 6.6H7.4" stroke="#8a8a8a" stroke-width="0.6"/></svg>
<svg style="left:41.5px;top:30.8px" width="10" height="9" viewBox="0 0 10 9"><ellipse cx="5.2" cy="8" rx="4.2" ry="0.9" fill="#dedcd6"/><path d="M3.4 2.2L6 0.8L9 6.4L7.4 7.4H4.6z" fill="#b9b7b1"/><path d="M1.3 5L3.2 6.5L7.3 1.3" fill="none" stroke="#565656" stroke-width="1.2"/><path d="M4.4 7.2L8.2 3.6" stroke="#9c9a94" stroke-width="0.9"/></svg>
<svg style="left:65px;top:30.4px" width="8" height="8" viewBox="0 0 8 8"><circle cx="4" cy="4" r="3.9" fill="#585858"/><circle cx="4" cy="4" r="3.4" fill="none" stroke="#7a7a7a" stroke-width="0.5"/><path d="M5.4 2V6L2.2 4z" fill="#f2f2f2"/></svg>
<svg style="left:77.2px;top:33.8px" width="4" height="3" viewBox="0 0 4 3"><path d="M0.3 0.2h3.4L2 2.1z" fill="#222"/></svg>
<svg style="left:88.7px;top:30.4px" width="8" height="8" viewBox="0 0 8 8"><circle cx="4" cy="4" r="3.9" fill="#b6b4ae"/><path d="M2.7 2V6L5.9 4z" fill="#f4f4f2"/></svg>
<svg style="left:100.8px;top:33.8px" width="4" height="3" viewBox="0 0 4 3"><path d="M0.3 0.2h3.4L2 2.1z" fill="#9a9a96"/></svg>
<svg style="left:110.4px;top:30.4px" width="8" height="8.4" viewBox="0 0 8 8.4"><path d="M1.2 3.4A3 3 0 0 1 6.3 2" fill="none" stroke="#505050" stroke-width="1.05"/><path d="M7.3 0.8V3.4H4.7z" fill="#505050"/><path d="M6.8 5A3 3 0 0 1 1.7 6.4" fill="none" stroke="#505050" stroke-width="1.05"/><path d="M0.7 7.6V5H3.3z" fill="#505050"/></svg>
<svg style="left:129.6px;top:32px" width="10.4" height="7.4" viewBox="0 0 10.4 7.4"><path d="M0.4 1.6C4.4 0.6 5.6 5.6 10 5.2" fill="none" stroke="#4a4a4a" stroke-width="0.95"/><path d="M0.4 6.4C4 5.6 6 1.2 10 1" fill="none" stroke="#4a4a4a" stroke-width="0.95"/></svg>
<div class="a" style="left:146.1px;top:31.2px;width:1.5px;height:7.6px;background:#444;background:linear-gradient(#777,#3a3a3a 30%);"></div>
<div class="a" style="left:149.7px;top:31.2px;width:1.5px;height:7.6px;background:#444;background:linear-gradient(#777,#3a3a3a 30%);"></div>
<div class="a" style="left:153.3px;top:31.2px;width:1.5px;height:7.6px;background:#444;background:linear-gradient(#777,#3a3a3a 30%);"></div>
<svg style="left:165.8px;top:29.4px" width="10.8" height="10.4" viewBox="0 0 10.8 10.4"><path d="M0.6 6.2L5 4.6L10.2 6V8.4L5.6 10.2L0.6 8.6z" fill="#e86c3a"/><path d="M0.6 6.2L5.6 7.8V10.2L0.6 8.6z" fill="#d4522a"/><ellipse cx="5.2" cy="5.4" rx="3.2" ry="2" fill="#a9a7a5"/><ellipse cx="4.6" cy="5" rx="1.8" ry="1" fill="#c9c7c5"/><path d="M6.6 0.3L8.1 0.9L7 4.4L5.9 4z" fill="#e2486a"/><circle cx="2.6" cy="7.8" r="0.8" fill="#f6b090"/></svg>
<svg style="left:187.5px;top:30.8px" width="10" height="8.2" viewBox="0 0 10 8.2"><rect x="0.2" y="0.2" width="9.4" height="6" rx="0.6" fill="#4a86cc"/><rect x="1" y="1" width="7.2" height="4.2" fill="#86bcea"/><path d="M1.8 2h3.4v1.8H1.8z" fill="#cfe6f8"/><path d="M3.2 6.2h3.2v0.9H7.8v0.8H2v-0.8h1.2z" fill="#6a9cd0"/></svg>
<svg style="left:207.2px;top:30.8px" width="10.6" height="8.8" viewBox="0 0 10.6 8.8"><rect x="0.6" y="0.6" width="9.2" height="7.4" fill="#dcdcdc" stroke="#262626" stroke-width="1.2"/><rect x="0.2" y="0.2" width="10" height="2.8" fill="#262626"/><path d="M1.6 1.6h5.4" stroke="#8a8a8a" stroke-width="0.7"/><path d="M1.4 4h7.6" stroke="#f6f6f6" stroke-width="0.8"/></svg>
<svg style="left:228.2px;top:30px" width="9" height="9.6" viewBox="0 0 9 9.6"><path d="M2.8 0.6H6.2L8.4 2.8V8.6H2.8z" fill="#f4f3f0" stroke="#d2d0ca" stroke-width="0.6"/><path d="M0.6 2H4.2L6 3.8V9H0.6z" fill="#fbfbfa" stroke="#d4d2cc" stroke-width="0.6"/></svg>
<svg style="left:248.8px;top:30.2px" width="9.8" height="9.2" viewBox="0 0 9.8 9.2"><rect x="0.6" y="0.6" width="8.6" height="8" fill="#f6f6f6" stroke="#1e1e1e" stroke-width="1.2"/><path d="M1.8 5.6L3.4 4L4.6 5L6.6 3" fill="none" stroke="#8a8a8a" stroke-width="0.8"/><path d="M7.6 3.4V7" stroke="#d42a2a" stroke-width="1.5"/></svg>
<span class="t" id="t71" style="left:273.29999999999995px;top:30.20px;font-size:7.6px;line-height:11.6px;color:#b8b6b0;font-weight:bold;transform:scaleX(0.8023);">D</span>
<span class="t" id="t72" style="left:272.79999999999995px;top:30.20px;font-size:7.6px;line-height:11.6px;color:#141414;font-weight:bold;transform:scaleX(0.7840);">D</span>
<span class="t" id="t73" style="left:288.2px;top:30.20px;font-size:7.6px;line-height:11.6px;color:#b8b6b0;font-weight:bold;transform:scaleX(0.8665);">E</span>
<span class="t" id="t74" style="left:287.7px;top:30.20px;font-size:7.6px;line-height:11.6px;color:#141414;font-weight:bold;transform:scaleX(0.8468);">E</span>
<span class="t" id="t75" style="left:304.2px;top:30.20px;font-size:7.6px;line-height:11.6px;color:#b8b6b0;font-weight:bold;transform:scaleX(0.8023);">C</span>
<span class="t" id="t76" style="left:303.7px;top:30.20px;font-size:7.6px;line-height:11.6px;color:#141414;font-weight:bold;transform:scaleX(0.7840);">C</span>
<div class="a" style="left:320.8px;top:30.1px;width:10.9px;height:9.6px;box-sizing:border-box;border:1.2px solid #6e6e6e;border-radius:2.2px;background:linear-gradient(90deg,#9a9a98,#f4f4f2 35%,#fdfdfd 60%,#b8b8b4);"></div>
<svg style="left:341.8px;top:30.2px" width="10.8" height="9.6" viewBox="0 0 10.8 9.6"><path d="M1.6 0.4H9.2V5.2H1.6z" fill="#6fb4e6"/><path d="M2.8 2.2H8L5.4 4.8z" fill="#3f86cc"/><path d="M0.4 5.4L1.8 3.6V5.8H9V3.6L10.4 5.4V9.2H0.4z" fill="#e4e6ea" stroke="#a8b0bc" stroke-width="0.6"/><path d="M3.4 6.6H7.4" stroke="#8fa0b8" stroke-width="0.8"/></svg>
<svg style="left:200.6px;top:73.6px" width="9" height="10.4" viewBox="0 0 9 10.4"><path d="M6.7 1.2V9.2" stroke="#4858b4" stroke-width="1.1"/><path d="M6.7 0L8.6 2.4H4.8zM6.7 10.4L8.6 8H4.8z" fill="#4858b4"/><path d="M0.6 3.4V7M2.2 2.4V8M2.2 2.4H4M2.2 8H4" fill="none" stroke="#8d8f98" stroke-width="0.9"/></svg>
<svg style="left:211.4px;top:78px" width="4" height="3" viewBox="0 0 4 3"><path d="M0.3 0.2h3.4L2 2.1z" fill="#222"/></svg>
<div class="a" style="left:220.4px;top:73.6px;width:10.8px;height:10.4px;background:#f2f5fc;border:1px solid #8c9abf;box-sizing:border-box;"></div>
<svg style="left:221.6px;top:75px" width="8.6" height="7.6" viewBox="0 0 8.6 7.6"><path d="M0.8 4.6L2.8 2.6L4.4 3.8L7.4 1" fill="none" stroke="#3c4a94" stroke-width="0.9"/><path d="M1 6.2H7.6" stroke="#9aa6c8" stroke-width="0.8" stroke-dasharray="1.4 0.8"/></svg>
<svg style="left:232.8px;top:78px" width="4" height="3" viewBox="0 0 4 3"><path d="M0.3 0.2h3.4L2 2.1z" fill="#222"/></svg>
<svg style="left:717.4px;top:59.6px" width="10.6" height="10" viewBox="0 0 10.6 10"><path d="M0.4 0.4H9L10.2 1.6V9.6H0.4z" fill="#5a8fdc" stroke="#3c6cc0" stroke-width="0.6"/><rect x="2" y="0.8" width="6.4" height="3.4" fill="#eef3fb"/><rect x="2.6" y="6" width="5.2" height="3.4" fill="#dfe8f6"/><rect x="3.4" y="6.6" width="1.6" height="2.4" fill="#4a7ccc"/></svg>
<div class="a" style="left:734px;top:58px;width:1px;height:12px;background:#bdbab1;"></div>
<div class="a" style="left:735px;top:58px;width:1px;height:12px;background:#f4f2ec;"></div>
<div class="a" style="left:739.4px;top:59.4px;width:10.6px;height:10.4px;background:#fbfcff;border:1px solid #6f86c8;box-sizing:border-box;"></div>
<svg style="left:740.6px;top:60.8px" width="8.4" height="7.6" viewBox="0 0 8.4 7.6"><path d="M0.8 5.4L2.8 3.2L4.2 4.2L7.4 1.2" fill="none" stroke="#2c3890" stroke-width="1"/></svg>
<svg style="left:751.8px;top:64px" width="4" height="3" viewBox="0 0 4 3"><path d="M0.3 0.2h3.4L2 2.1z" fill="#222"/></svg>
<div class="a" style="left:758.6px;top:57.8px;width:14px;height:12.6px;background:#fbfbfa;border:1px solid #e8e6e0;box-sizing:border-box;"></div>
<svg style="left:760.8px;top:59.4px" width="10.8" height="10.4" viewBox="0 0 10.8 10.4"><rect x="0.4" y="0.4" width="10" height="9.4" fill="#e8f0fc" stroke="#4a74c8" stroke-width="0.8"/><path d="M1.4 3.6L3.4 2.4L5.2 3.4L7.2 2.2L9.4 3.2" fill="none" stroke="#3a60b8" stroke-width="0.8"/><path d="M0.4 5.4H10.4V9.8H0.4z" fill="#5a88d8"/><path d="M0.8 7H10M3 5.4V9.8M5.6 5.4V9.8M8.2 5.4V9.8" stroke="#dce8fa" stroke-width="0.6"/></svg>
<svg style="left:777.2px;top:59px" width="11" height="10.8" viewBox="0 0 11 10.8"><rect x="2.6" y="0.4" width="6" height="5.4" fill="#e6eefb" stroke="#4a74c8" stroke-width="0.8"/><rect x="2.6" y="0.4" width="6" height="1.6" fill="#4a74c8"/><rect x="0.4" y="3" width="5.6" height="6.6" fill="#f4f7fd" stroke="#4a74c8" stroke-width="0.8"/><rect x="0.4" y="3" width="5.6" height="1.6" fill="#5a88d8"/><rect x="6.6" y="4.6" width="4" height="4.4" fill="#e6eefb" stroke="#4a74c8" stroke-width="0.8"/><path d="M1.4 6.4H5M1.4 8H5" stroke="#8aa8dc" stroke-width="0.6"/></svg>
<svg style="left:662px;top:510.4px" width="9" height="6.4" viewBox="0 0 9 6.4"><path d="M0.2 3H7" stroke="#7f90e2" stroke-width="1.5"/><path d="M5.4 1.2L7.4 3L5.4 4.8z" fill="#6878d4"/><path d="M7.8 0.6V5.4" stroke="#4656bc" stroke-width="1.1"/></svg>
<svg style="left:673.2px;top:512.4px" width="4" height="3" viewBox="0 0 4 3"><path d="M0.3 0.2h3.4L2 2.1z" fill="#222"/></svg>
<div class="a" style="left:688.4px;top:510px;width:3px;height:7.2px;background:#74c47c;border-radius:1px;"></div>
<div class="a" style="left:692.8px;top:510px;width:3px;height:7.2px;background:#74c47c;border-radius:1px;"></div>
<div class="a" style="left:682.4px;top:509px;width:1px;height:10px;background:#c8c5bc;"></div>
<div class="a" style="left:683.4px;top:509px;width:1px;height:10px;background:#ebe9e3;"></div>
<svg style="left:707.6px;top:510.6px" width="5" height="6" viewBox="0 0 5 6"><path d="M0.4 0.4V5.6L4.6 3z" fill="#c6c4bc"/></svg>
<div class="a" style="left:719.3px;top:509px;width:1px;height:11px;background:#bdbab1;"></div>
<div class="a" style="left:720.3px;top:509px;width:1px;height:11px;background:#f4f2ec;"></div>
<svg style="left:725.4px;top:509.6px" width="9.4" height="9.4" viewBox="0 0 9.4 9.4"><path d="M2.6 0.6H6.8V7H2.6z" fill="#dcdad4" stroke="#b4b2aa" stroke-width="0.7"/><path d="M0.6 7.4H8.8M4.7 2V6.8" stroke="#b4b2aa" stroke-width="0.9"/><path d="M3 5.2L4.7 7L6.4 5.2" fill="none" stroke="#b4b2aa" stroke-width="0.9"/></svg>
<svg style="left:742.8px;top:508.7px" width="9.4" height="9.6" viewBox="0 0 9.4 9.6"><path d="M3.6 5.6L0.8 9" stroke="#8088b4" stroke-width="1.5"/><circle cx="5.9" cy="3.4" r="3" fill="#f6f8fd" stroke="#5c6cba" stroke-width="0.85"/><path d="M4.5 3.4H7.3" stroke="#4454a8" stroke-width="0.8"/><path d="M5.9 2V4.8" stroke="#4454a8" stroke-width="0.8"/></svg>
<svg style="left:759.8px;top:508.7px" width="9.4" height="9.6" viewBox="0 0 9.4 9.6"><path d="M3.6 5.6L0.8 9" stroke="#8088b4" stroke-width="1.5"/><circle cx="5.9" cy="3.4" r="3" fill="#f6f8fd" stroke="#5c6cba" stroke-width="0.85"/><path d="M4.5 3.4H7.3" stroke="#4454a8" stroke-width="0.8"/></svg>
<svg style="left:776px;top:508.6px" width="10" height="10" viewBox="0 0 10 10"><path d="M4.4 0.5H8.6V3.6H4.4z" fill="#e8e6e0" stroke="#cbc9c1" stroke-width="0.6"/><path d="M0.8 3.6H9V7.4H0.8z" fill="#e2e0da" stroke="#cbc9c1" stroke-width="0.6"/><path d="M2.4 6.2H7.2V9.6H2.4z" fill="#f0eeea" stroke="#cbc9c1" stroke-width="0.6"/></svg>
</body></html>
